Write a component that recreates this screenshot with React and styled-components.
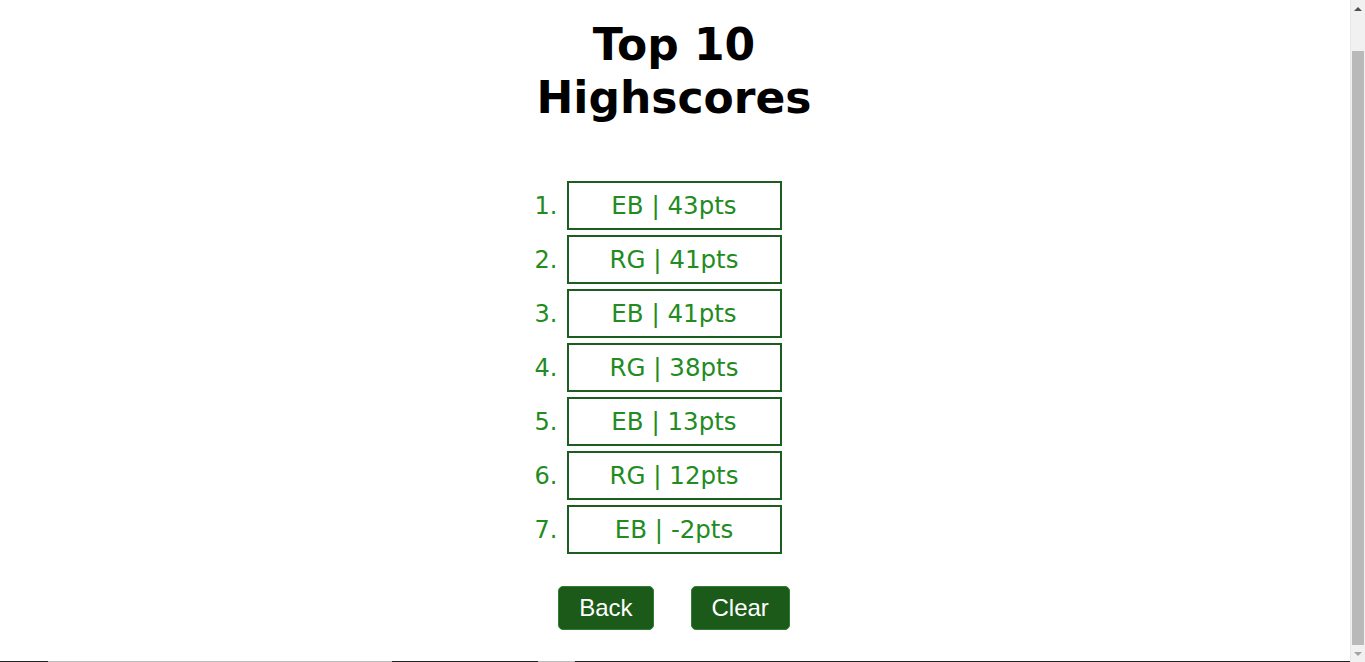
import styled, { createGlobalStyle } from "styled-components";

const scores = [
  { initials: "EB", points: 43 },
  { initials: "RG", points: 41 },
  { initials: "EB", points: 41 },
  { initials: "RG", points: 38 },
  { initials: "EB", points: 13 },
  { initials: "RG", points: 12 },
  { initials: "EB", points: -2 },
];

const GlobalStyle = createGlobalStyle`
  html, body {
    overflow: hidden;
  }
  body {
    margin: 0;
    background: #fff;
    font-family: "DejaVu Sans", Verdana, sans-serif;
  }
`;

export default function App() {
  return (
    <>
      <GlobalStyle />
      <Frame>
        <Page>
          <Title>Top 10 Highscores</Title>
          <ScoreList>
            {scores.map((s, i) => (
              <ScoreRow key={i}>
                <Rank>{i + 1}.</Rank>
                <ScoreBox>
                  {s.initials} | {s.points}pts
                </ScoreBox>
              </ScoreRow>
            ))}
          </ScoreList>
          <Buttons>
            <Button>Back</Button>
            <Button>Clear</Button>
          </Buttons>
        </Page>
        <Footer>
          <Track $w={48} />
          <Track $w={344} $light />
          <Track $w={146} />
          <Track $w={37} $light />
          <Track $grow />
        </Footer>
      </Frame>
      <ScrollRail>
        <Arrow />
        <ThumbArea>
          <Thumb />
        </ThumbArea>
        <Arrow $down />
      </ScrollRail>
    </>
  );
}

const Frame = styled.div`
  width: calc(100% - 15px);
  height: 662px;
  display: flex;
  flex-direction: column;
`;

const Page = styled.main`
  flex: 1;
  display: flex;
  flex-direction: column;
  align-items: center;
  padding-top: 18px;
  padding-right: 2px;
`;

const Title = styled.h1`
  width: 300px;
  margin: 0;
  text-align: center;
  font-size: 44px;
  line-height: 53px;
  font-weight: bold;
  color: #000;
`;

const ScoreList = styled.ol`
  list-style: none;
  margin: 57px 0 0;
  padding: 0;
  display: flex;
  flex-direction: column;
  gap: 5px;
`;

const ScoreRow = styled.li`
  display: flex;
  align-items: center;
  gap: 9px;
  margin-left: -34px;
`;

const Rank = styled.span`
  width: 25px;
  text-align: right;
  font-size: 24px;
  color: #228b22;
`;

const ScoreBox = styled.div`
  width: 215px;
  height: 49px;
  box-sizing: border-box;
  border: 2px solid #1b5e20;
  display: flex;
  align-items: center;
  justify-content: center;
  font-size: 24.5px;
  color: #228b22;
`;

const Buttons = styled.div`
  display: flex;
  gap: 37px;
  margin-top: 32px;
`;

const Button = styled.button`
  height: 44px;
  padding: 0 20px;
  background: #1b5a18;
  border: 1px solid #2e7d32;
  border-radius: 5px;
  color: #fff;
  font-family: "Liberation Sans", Arial, sans-serif;
  font-size: 24px;
  cursor: pointer;
`;

const Footer = styled.footer`
  display: flex;
  height: 1px;
  background: #222;
`;

const Track = styled.div`
  height: 1px;
  width: ${(p) => (p.$grow ? "auto" : `${p.$w}px`)};
  flex: ${(p) => (p.$grow ? "1" : "none")};
  background: ${(p) => (p.$light ? "#bbb" : "#222")};
`;

const ScrollRail = styled.div`
  position: fixed;
  top: 0;
  right: 0;
  width: 15px;
  height: 100vh;
  background: #f1f1f1;
  border-left: 1px solid #e8e8e8;
  box-sizing: border-box;
  display: flex;
  flex-direction: column;
`;

const Arrow = styled.div`
  height: 17px;
  flex: none;
  display: flex;
  align-items: center;
  justify-content: center;
  &::before {
    content: "";
    display: block;
    width: 0;
    height: 0;
    border-left: 4px solid transparent;
    border-right: 4px solid transparent;
    ${(p) =>
      p.$down
        ? "border-top: 4px solid #a3a3a3;"
        : "border-bottom: 4px solid #505050;"}
  }
`;

const ThumbArea = styled.div`
  flex: 1;
  display: flex;
  flex-direction: column;
  justify-content: flex-end;
  padding: 0 1px;
`;

const Thumb = styled.div`
  height: 594px;
  background: #b9b9b9;
`;
